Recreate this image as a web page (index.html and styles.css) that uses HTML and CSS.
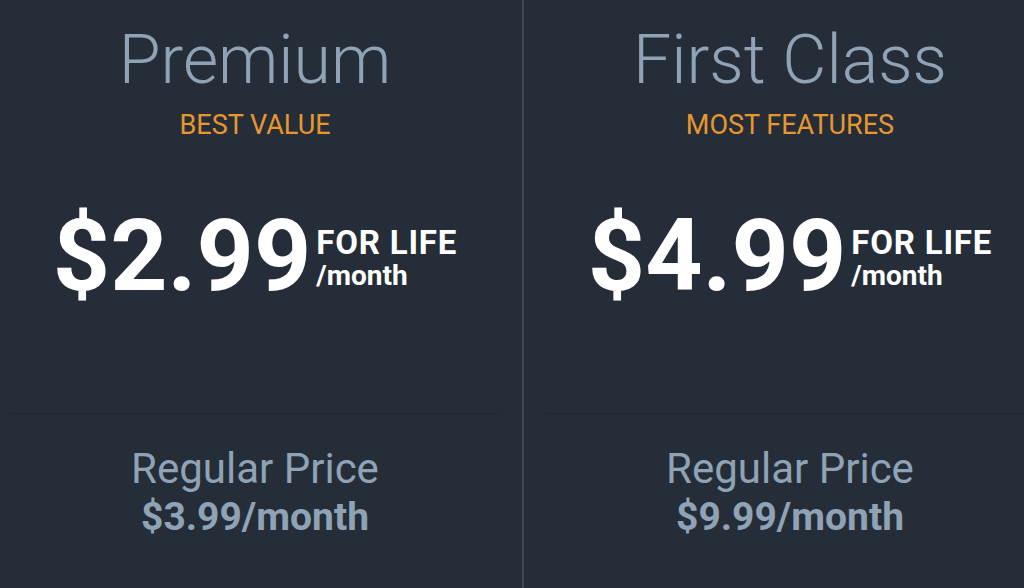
FILE: index.html
```html
<!DOCTYPE html>
<html lang="en">
<head>
<meta charset="utf-8">
<title>Plans</title>
<link rel="stylesheet" href="styles.css">
</head>
<body>
<div class="plans">
  <section class="plan">
    <div class="plan-top">
      <h2 class="plan-name">Premium</h2>
      <div class="plan-tag">BEST VALUE</div>
      <div class="price">
        <span class="price-amount">$2.99</span>
        <span class="price-note"><span class="note-life">FOR LIFE</span><span class="note-month">/month</span></span>
      </div>
    </div>
    <div class="plan-bottom">
      <div class="regular-label">Regular Price</div>
      <div class="regular-value">$3.99/month</div>
    </div>
  </section>
  <section class="plan">
    <div class="plan-top">
      <h2 class="plan-name">First Class</h2>
      <div class="plan-tag">MOST FEATURES</div>
      <div class="price">
        <span class="price-amount">$4.99</span>
        <span class="price-note"><span class="note-life">FOR LIFE</span><span class="note-month">/month</span></span>
      </div>
    </div>
    <div class="plan-bottom">
      <div class="regular-label">Regular Price</div>
      <div class="regular-value">$9.99/month</div>
    </div>
  </section>
</div>
</body>
</html>
```
FILE: styles.css
```css
html, body {
  margin: 0;
  padding: 0;
  background: #252e38;
  overflow: hidden;
}
body {
  width: 1024px;
  height: 588px;
  font-family: Roboto, "Liberation Sans", sans-serif;
}
.plans {
  display: grid;
  grid-template-columns: 534px 534px;
  margin-left: -12px;
  width: 1070px;
  height: 588px;
}
.plan {
  display: flex;
  flex-direction: column;
  align-items: stretch;
  text-align: center;
}
.plan + .plan {
  border-left: 2px solid #3b4958;
}
.plan-top {
  margin: 0 22px;
  height: 413px;
  border-bottom: 1px solid #20282f;
  display: flex;
  flex-direction: column;
  align-items: center;
}
.plan-name {
  margin: 20px 0 0;
  font-weight: 300;
  font-size: 68px;
  line-height: 80px;
  color: #8fa2b6;
}
.plan-tag {
  margin-top: 10px;
  font-size: 27px;
  line-height: 30px;
  color: #e8962e;
}
.price {
  margin-top: 66px;
  display: flex;
  align-items: flex-start;
  color: #ffffff;
}
.price-amount {
  font-weight: 700;
  font-size: 100px;
  line-height: 100px;
}
.price-note {
  display: flex;
  flex-direction: column;
  align-items: flex-start;
  margin-left: 5px;
  margin-top: 18px;
  font-weight: 700;
  text-align: left;
}
.note-life {
  font-size: 33px;
  line-height: 38px;
  letter-spacing: 0.8px;
}
.note-month {
  font-size: 28px;
  line-height: 28px;
}
.plan-bottom {
  padding-top: 30px;
  display: flex;
  flex-direction: column;
  align-items: center;
  color: #8fa2b6;
}
.regular-label {
  font-size: 42px;
  line-height: 50px;
}
.regular-value {
  font-weight: 700;
  font-size: 39px;
  line-height: 46px;
}
```
